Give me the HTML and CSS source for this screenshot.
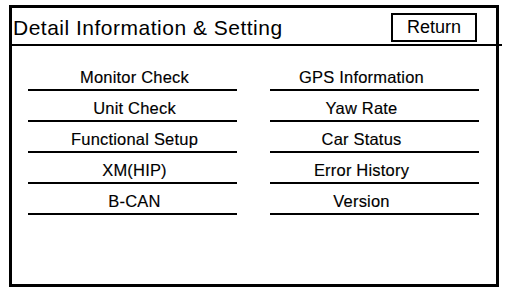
FILE: index.html
```html
<!DOCTYPE html>
<html>
<head>
<meta charset="utf-8">
<link rel="stylesheet" href="styles.css">
</head>
<body>
<div class="screen">
  <div class="header">
    <div class="title">Detail Information &amp; Setting</div>
    <div class="return">Return</div>
  </div>
  <div class="menu">
    <div class="item left">Monitor Check</div>
    <div class="item right">GPS Information</div>
    <div class="item left">Unit Check</div>
    <div class="item right">Yaw Rate</div>
    <div class="item left">Functional Setup</div>
    <div class="item right">Car Status</div>
    <div class="item left">XM(HIP)</div>
    <div class="item right">Error History</div>
    <div class="item left">B-CAN</div>
    <div class="item right">Version</div>
  </div>
</div>
</body>
</html>
```
FILE: styles.css
```css
html, body {
  margin: 0;
  padding: 0;
  background: #fff;
}
body {
  font-family: "Liberation Sans", Arial, sans-serif;
  color: #000;
}
.screen {
  margin: 5px 0 0 9px;
  width: 490px;
  height: 282px;
  box-sizing: border-box;
  border: 3px solid #000;
  display: flex;
  flex-direction: column;
}
.header {
  position: relative;
  height: 38px;
  box-sizing: border-box;
  border-bottom: 2px solid #000;
  display: flex;
  align-items: center;
  justify-content: space-between;
  padding: 0 19px 0 1px;
}
.header::after {
  content: "";
  position: absolute;
  right: -6px;
  bottom: -2px;
  width: 5px;
  height: 2px;
  background: #000;
}
.title {
  font-size: 21px;
  letter-spacing: 0.5px;
  margin-top: 3px;
}
.return {
  width: 86px;
  height: 29px;
  box-sizing: border-box;
  border: 2px solid #000;
  font-size: 18px;
  display: flex;
  align-items: center;
  justify-content: center;
  margin-top: 3px;
}
.menu {
  display: grid;
  grid-template-columns: 209px 209px;
  column-gap: 33px;
  padding: 14px 0 0 16px;
}
.item {
  height: 31px;
  box-sizing: border-box;
  border-bottom: 2px solid #000;
  font-size: 16.5px;
  letter-spacing: 0.2px;
  text-align: center;
  padding-top: 8px;
  -webkit-text-stroke: 0.15px #000;
}
.left {
  padding-left: 4px;
}
.right {
  padding-right: 26px;
}
```
